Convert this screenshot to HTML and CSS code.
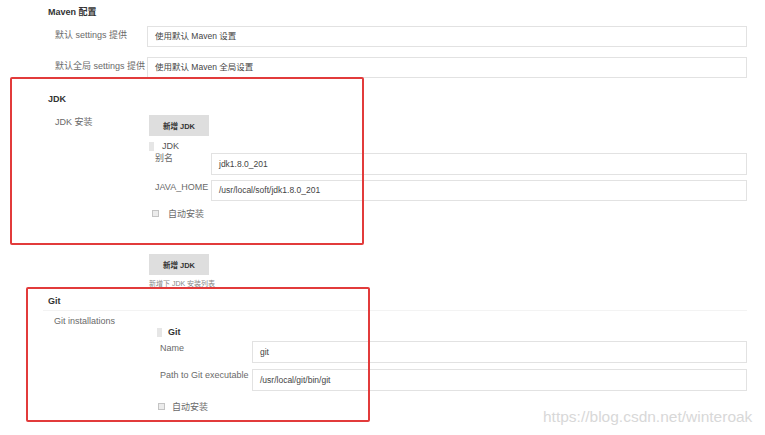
FILE: index.html
```html
<!DOCTYPE html>
<html lang="zh">
<head>
<meta charset="utf-8">
<title>Jenkins 全局工具配置</title>
<link rel="stylesheet" href="styles.css">
</head>
<body>
<div class="config">
  <section class="sec maven">
    <div class="sec-title">Maven 配置</div>
    <div class="row row-a">
      <div class="lbl">默认 settings 提供</div>
      <div class="field">使用默认 Maven 设置</div>
    </div>
    <div class="row row-b">
      <div class="lbl">默认全局 settings 提供</div>
      <div class="field">使用默认 Maven 全局设置</div>
    </div>
  </section>

  <section class="sec jdk">
    <div class="sec-title">JDK</div>
    <div class="row inst-row">
      <div class="lbl">JDK 安装</div>
      <div class="inst-body">
        <div class="btn">新增 JDK</div>
        <div class="item-head"><span class="handle"></span><span>JDK</span></div>
        <div class="sub-row s1">
          <div class="sub-lbl">别名</div>
          <div class="field tall">jdk1.8.0_201</div>
        </div>
        <div class="sub-row s2">
          <div class="sub-lbl">JAVA_HOME</div>
          <div class="field">/usr/local/soft/jdk1.8.0_201</div>
        </div>
        <div class="check-row"><span class="box"></span><span class="check-text">自动安装</span></div>
        <div class="btn btn-second">新增 JDK</div>
        <div class="hint">新增下 JDK 安装列表</div>
      </div>
    </div>
  </section>

  <section class="sec git">
    <div class="sec-title lined-bottom">Git</div>
    <div class="row inst-row">
      <div class="lbl">Git installations</div>
      <div class="inst-body">
        <div class="item-head bold"><span class="handle"></span><span>Git</span></div>
        <div class="sub-row g1">
          <div class="sub-lbl">Name</div>
          <div class="field tall">git</div>
        </div>
        <div class="sub-row g2">
          <div class="sub-lbl">Path to Git executable</div>
          <div class="field tall">/usr/local/git/bin/git</div>
        </div>
        <div class="check-row"><span class="box"></span><span class="check-text">自动安装</span></div>
      </div>
    </div>
  </section>
</div>

<div class="mark mark-jdk"></div>
<div class="mark mark-git"></div>
<div class="watermark">https://blog.csdn.net/winteroak</div>
</body>
</html>
```

FILE: styles.css
```css
body {
  margin: 0;
  background: #ffffff;
  font-family: "Liberation Sans", "Noto Sans CJK SC", sans-serif;
  font-size: 9px;
  color: #6a6a6a;
  position: relative;
  height: 435px;
  overflow: hidden;
}

.config {
  padding: 6px 18px 0 48px;
}

.sec-title {
  font-weight: bold;
  color: #333;
  font-size: 9px;
  line-height: 12px;
  height: 12px;
}

.row {
  display: flex;
}

.lbl {
  flex: none;
  box-sizing: border-box;
  padding-left: 7px;
  line-height: 12px;
  white-space: nowrap;
}

.field {
  flex: 1;
  box-sizing: border-box;
  height: 21px;
  border: 1px solid #e2e2e2;
  padding-left: 7px;
  line-height: 19px;
  color: #444;
  font-size: 8.5px;
  background: #fff;
  white-space: nowrap;
}

.field.tall {
  height: 22px;
  line-height: 20px;
}

/* Maven */
.maven .lbl { width: 99px; padding-top: 3px; }
.row-a { margin-top: 8px; }
.row-b { margin-top: 10px; }

/* JDK */
.jdk { margin-top: 15px; }
.jdk .lbl { width: 101px; padding-top: 1px; }
.inst-row { margin-top: 10px; }
.inst-body { flex: 1; }

.btn {
  width: 60px;
  height: 21px;
  background: #dedede;
  color: #333;
  font-weight: bold;
  font-size: 7.5px;
  display: flex;
  align-items: center;
  justify-content: center;
}

.btn-second { margin-top: 35px; }

.hint {
  margin-top: 4px;
  font-size: 7px;
  line-height: 9px;
  color: #888;
}

.item-head {
  display: flex;
  align-items: center;
  height: 10px;
  margin-top: 5px;
  color: #555;
}

.handle {
  width: 5px;
  height: 9px;
  background: #e6e6e6;
  margin-right: 8px;
}

.sub-row { display: flex; }
.sub-lbl {
  flex: none;
  box-sizing: border-box;
  line-height: 10px;
  white-space: nowrap;
}

.jdk .sub-lbl { width: 62px; padding-left: 6px; }
.s1 { margin-top: 2px; }
.s2 { margin-top: 5px; }
.s2 .sub-lbl { padding-top: 2px; }

.check-row {
  display: flex;
  align-items: center;
  height: 12px;
  margin-top: 6px;
}

.box {
  width: 7px;
  height: 7px;
  box-sizing: border-box;
  border: 1px solid #c4c4c4;
  background: #ececec;
  margin-left: 3px;
}

.check-text { margin-left: 9px; }

/* Git */
.git { margin-top: 7px; }
.lined-bottom {
  height: auto;
  padding-bottom: 3px;
  border-bottom: 1px solid #f3f3f3;
  margin-left: -5px;
  padding-left: 5px;
}
.git .inst-row { margin-top: 4px; }
.git .lbl { width: 109px; padding-left: 6px; }
.git .item-head { margin-top: 12px; color: #333; font-weight: bold; }
.git .handle { margin-right: 6px; }
.git .sub-lbl { width: 95px; padding-left: 3px; }
.g1 { margin-top: 4px; }
.g1 .sub-lbl { padding-top: 2px; }
.g2 { margin-top: 6px; }
.g2 .sub-lbl { padding-top: 1px; }
.git .check-row { margin-top: 9px; }
.git .box { margin-left: 1px; }
.git .check-text { margin-left: 7px; }

/* annotation overlays */
.mark {
  position: absolute;
  box-sizing: border-box;
  border: 2px solid #e23b3b;
  border-radius: 2px;
}

.mark-jdk {
  left: 10px;
  top: 77px;
  width: 354px;
  height: 168px;
}

.mark-git {
  left: 26px;
  top: 287px;
  width: 344px;
  height: 135px;
}

.watermark {
  position: absolute;
  left: 543px;
  top: 408px;
  font-size: 15.5px;
  color: #d8d8d8;
  white-space: nowrap;
}
```
